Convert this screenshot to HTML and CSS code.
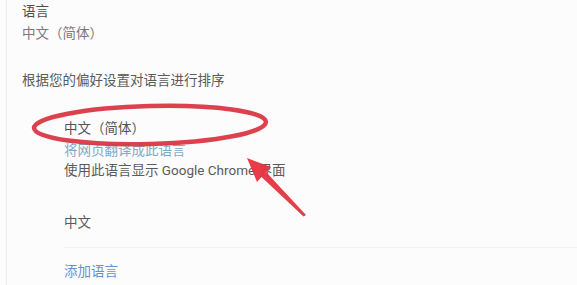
FILE: index.html
```html
<!DOCTYPE html>
<html lang="zh-CN">
<head>
<meta charset="utf-8">
<link rel="stylesheet" href="styles.css">
</head>
<body>
<div class="page">
  <div class="title">语言</div>
  <div class="sub">中文（简体）</div>
  <div class="hint">根据您的偏好设置对语言进行排序</div>
  <div class="langs">
    <div class="lang first">
      <div class="name">中文（简体）</div>
      <div class="link">将网页翻译成此语言</div>
      <div class="desc">使用此语言显示 Google Chrome 界面</div>
    </div>
    <div class="lang second">
      <div class="name">中文</div>
    </div>
    <div class="add">添加语言</div>
  </div>
  <svg class="annot" width="577" height="285" viewBox="0 0 577 285">
    <ellipse cx="150" cy="125" rx="116" ry="19" transform="rotate(-1.5 150 125)" fill="none" stroke="#d9323f" stroke-width="4.5" opacity="0.92"/>
    <polygon points="247,158 271,167 266.5,172.5 306,215 303.5,216.5 261.5,177 257,182" fill="#e8323f" opacity="0.95"/>
  </svg>
</div>
</body>
</html>
```
FILE: styles.css
```css
html, body {
  margin: 0;
  padding: 0;
  background: #fcfcfc;
}
body {
  font-family: "Roboto", "Noto Sans CJK SC", sans-serif;
  font-size: 13.5px;
  color: #555;
}
.page {
  position: relative;
  margin-left: 6px;
  border-left: 1px solid #ededed;
  padding: 1px 0 0 15px;
  height: 284px;
  overflow: hidden;
}
.title, .sub, .hint, .name, .link, .desc, .add {
  line-height: 20px;
  height: 20px;
  white-space: nowrap;
}
.title { color: #4d4d4d; }
.sub { margin-top: 2px; color: #7a7a7a; }
.hint { margin-top: 27px; color: #5a5a5a; }
.langs { margin-left: 42px; }
.first { margin-top: 28px; }
.first .name { color: #555; }
.link { margin-top: 2px; color: #80abc6; }
.desc { color: #5a5a5a; }
.second {
  margin-top: 32px;
  padding-bottom: 15px;
  border-bottom: 1px solid #f1f1f1;
}
.second .name { color: #5a5a5a; }
.add { margin-top: 13px; color: #6193d0; }
.annot {
  position: absolute;
  left: -7px;
  top: 0;
}
```
